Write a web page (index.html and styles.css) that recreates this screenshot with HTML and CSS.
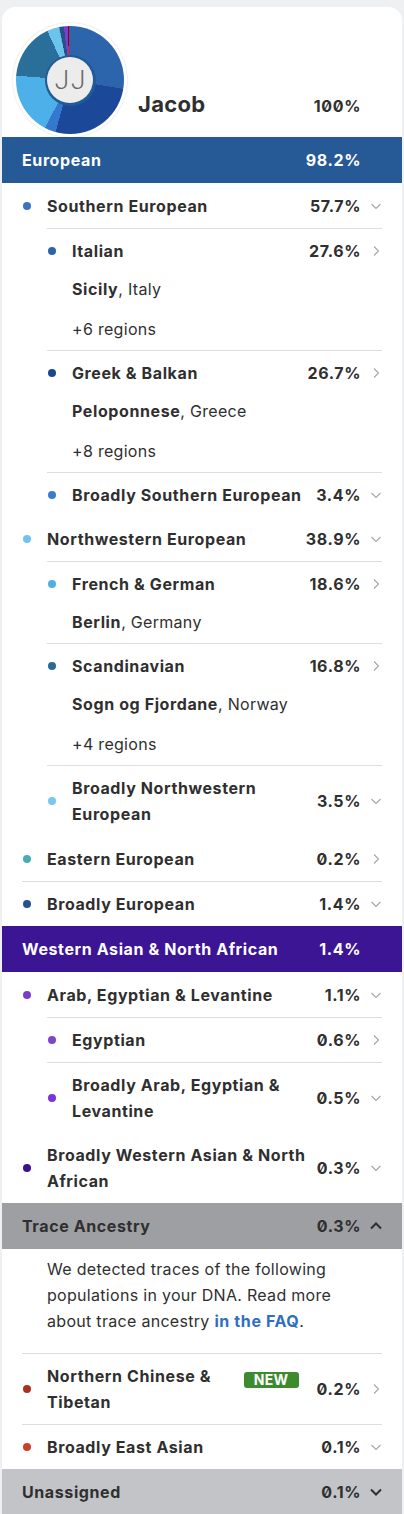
FILE: index.html
```html
<!DOCTYPE html>
<html lang="en">
<head>
<meta charset="utf-8">
<title>Ancestry Composition</title>
<link rel="stylesheet" href="styles.css">
</head>
<body>
<div class="card">
  <div class="profile">
    <div class="avatar">
      <div class="donut">
        <div class="hole-ring"><div class="hole"><span class="initials">JJ</span></div></div>
      </div>
    </div>
    <div class="profile-info">
      <span class="profile-name">Jacob</span>
      <span class="pct">100%</span>
      <span class="chev"></span>
    </div>
  </div>

  <div class="head head-eu"><span class="name">European</span><span class="pct">98.2%</span><span class="chev"></span></div>
  <div class="list">
    <div class="entry tall">
      <div class="line"><span class="dot c-south"></span><span class="name">Southern European</span><span class="pct">57.7%</span><svg class="chev" viewBox="0 0 12 12"><path class="ch-light" d="M1.5 4 L6 8.5 L10.5 4"/></svg></div>
    </div>
    <div class="sublist">
      <div class="entry bt has-loc">
        <div class="line"><span class="dot c-italian"></span><span class="name">Italian</span><span class="pct">27.6%</span><svg class="chev" viewBox="0 0 12 12"><path class="ch-light" d="M4 1.5 L8.5 6 L4 10.5"/></svg></div>
        <div class="loc"><b>Sicily</b>, Italy</div>
        <div class="loc more">+6 regions</div>
      </div>
      <div class="entry bt has-loc">
        <div class="line"><span class="dot c-greek"></span><span class="name">Greek &amp; Balkan</span><span class="pct">26.7%</span><svg class="chev" viewBox="0 0 12 12"><path class="ch-light" d="M4 1.5 L8.5 6 L4 10.5"/></svg></div>
        <div class="loc"><b>Peloponnese</b>, Greece</div>
        <div class="loc more">+8 regions</div>
      </div>
      <div class="entry bt">
        <div class="line"><span class="dot c-bsouth"></span><span class="name">Broadly Southern European</span><span class="pct">3.4%</span><svg class="chev" viewBox="0 0 12 12"><path class="ch-light" d="M1.5 4 L6 8.5 L10.5 4"/></svg></div>
      </div>
    </div>
    <div class="entry">
      <div class="line"><span class="dot c-nw"></span><span class="name">Northwestern European</span><span class="pct">38.9%</span><svg class="chev" viewBox="0 0 12 12"><path class="ch-light" d="M1.5 4 L6 8.5 L10.5 4"/></svg></div>
    </div>
    <div class="sublist">
      <div class="entry bt has-loc">
        <div class="line"><span class="dot c-french"></span><span class="name">French &amp; German</span><span class="pct">18.6%</span><svg class="chev" viewBox="0 0 12 12"><path class="ch-light" d="M4 1.5 L8.5 6 L4 10.5"/></svg></div>
        <div class="loc"><b>Berlin</b>, Germany</div>
      </div>
      <div class="entry bt has-loc">
        <div class="line"><span class="dot c-scand"></span><span class="name">Scandinavian</span><span class="pct">16.8%</span><svg class="chev" viewBox="0 0 12 12"><path class="ch-light" d="M4 1.5 L8.5 6 L4 10.5"/></svg></div>
        <div class="loc"><b>Sogn og Fjordane</b>, Norway</div>
        <div class="loc more">+4 regions</div>
      </div>
      <div class="entry bt">
        <div class="line"><span class="dot c-bnw"></span><span class="name">Broadly Northwestern European</span><span class="pct">3.5%</span><svg class="chev" viewBox="0 0 12 12"><path class="ch-light" d="M1.5 4 L6 8.5 L10.5 4"/></svg></div>
      </div>
    </div>
    <div class="entry tall">
      <div class="line"><span class="dot c-east"></span><span class="name">Eastern European</span><span class="pct">0.2%</span><svg class="chev" viewBox="0 0 12 12"><path class="ch-light" d="M4 1.5 L8.5 6 L4 10.5"/></svg></div>
    </div>
    <div class="entry bt">
      <div class="line"><span class="dot c-beu"></span><span class="name">Broadly European</span><span class="pct">1.4%</span><svg class="chev" viewBox="0 0 12 12"><path class="ch-light" d="M1.5 4 L6 8.5 L10.5 4"/></svg></div>
    </div>
  </div>

  <div class="head head-wana"><span class="name">Western Asian &amp; North African</span><span class="pct">1.4%</span><span class="chev"></span></div>
  <div class="list">
    <div class="entry tall">
      <div class="line"><span class="dot c-arab"></span><span class="name">Arab, Egyptian &amp; Levantine</span><span class="pct">1.1%</span><svg class="chev" viewBox="0 0 12 12"><path class="ch-light" d="M1.5 4 L6 8.5 L10.5 4"/></svg></div>
    </div>
    <div class="sublist">
      <div class="entry bt">
        <div class="line"><span class="dot c-egypt"></span><span class="name">Egyptian</span><span class="pct">0.6%</span><svg class="chev" viewBox="0 0 12 12"><path class="ch-light" d="M4 1.5 L8.5 6 L4 10.5"/></svg></div>
      </div>
      <div class="entry bt">
        <div class="line"><span class="dot c-barab"></span><span class="name">Broadly Arab, Egyptian &amp; Levantine</span><span class="pct">0.5%</span><svg class="chev" viewBox="0 0 12 12"><path class="ch-light" d="M1.5 4 L6 8.5 L10.5 4"/></svg></div>
      </div>
    </div>
    <div class="entry">
      <div class="line"><span class="dot c-bwana"></span><span class="name">Broadly Western Asian &amp; North African</span><span class="pct">0.3%</span><svg class="chev" viewBox="0 0 12 12"><path class="ch-light" d="M1.5 4 L6 8.5 L10.5 4"/></svg></div>
    </div>
  </div>

  <div class="head head-trace"><span class="name">Trace Ancestry</span><span class="pct">0.3%</span><svg class="chev" viewBox="0 0 12 12"><path class="ch-dark" d="M1 8.5 L6 3.5 L11 8.5"/></svg></div>
  <div class="list">
    <p class="trace-text">We detected traces of the following populations in your DNA. Read more about trace ancestry <a class="faq" href="#">in the FAQ</a>.</p>
    <div class="entry bt">
      <div class="line"><span class="dot c-nchin"></span><span class="name">Northern Chinese &amp; Tibetan</span><span class="badge">NEW</span><span class="pct">0.2%</span><svg class="chev" viewBox="0 0 12 12"><path class="ch-light" d="M4 1.5 L8.5 6 L4 10.5"/></svg></div>
    </div>
    <div class="entry bt">
      <div class="line"><span class="dot c-beast"></span><span class="name">Broadly East Asian</span><span class="pct">0.1%</span><svg class="chev" viewBox="0 0 12 12"><path class="ch-light" d="M1.5 4 L6 8.5 L10.5 4"/></svg></div>
    </div>
  </div>

  <div class="head head-unassigned"><span class="name">Unassigned</span><span class="pct">0.1%</span><svg class="chev" viewBox="0 0 12 12"><path class="ch-dark" d="M1 3.5 L6 8.5 L11 3.5"/></svg></div>
</div>
</body>
</html>
```

FILE: styles.css
```css
html, body {
  margin: 0;
  padding: 0;
}
body {
  background: #eef0f2;
  font-family: Inter, "Noto Sans", "DejaVu Sans", sans-serif;
  font-size: 16px;
  letter-spacing: 0.3px;
  color: #2f2f2f;
  height: 1514px;
  overflow: hidden;
}
.card {
  margin: 7px 2px 0;
  background: #fff;
  border-radius: 14px 14px 0 0;
  overflow: hidden;
}
.profile {
  display: flex;
  align-items: flex-end;
  height: 130px;
  padding: 16px 20px 0 11px;
  box-sizing: border-box;
}
.avatar {
  flex: none;
  width: 114px;
  height: 114px;
  border-radius: 50%;
  background: #fff;
  box-shadow: 0 0 2px rgba(0,0,0,0.18);
  display: flex;
  align-items: center;
  justify-content: center;
}
.donut {
  width: 108px;
  height: 108px;
  border-radius: 50%;
  background: conic-gradient(
    #2d65ad 0deg 99.4deg,
    #1c4899 99.4deg 195.5deg,
    #3578cf 195.5deg 207.7deg,
    #4db0e8 207.7deg 274.7deg,
    #2a6f99 274.7deg 335.2deg,
    #6cc3ec 335.2deg 347.8deg,
    #4aaeb0 347.8deg 348.5deg,
    #25528f 348.5deg 353.5deg,
    #7a3fc8 353.5deg 357.5deg,
    #3a128f 357.5deg 358.6deg,
    #b3391f 358.6deg 359.6deg,
    #c3c4c7 359.6deg 360deg
  );
  display: flex;
  align-items: center;
  justify-content: center;
}
.hole-ring {
  width: 51px;
  height: 51px;
  border-radius: 50%;
  background: #215b95;
  display: flex;
  align-items: center;
  justify-content: center;
}
.hole {
  width: 46px;
  height: 46px;
  border-radius: 50%;
  background: #ececec;
  display: flex;
  align-items: center;
  justify-content: center;
}
.initials {
  font-family: Roboto, "Liberation Sans", sans-serif;
  font-weight: 300;
  font-size: 26px;
  color: #666;
  letter-spacing: 2px;
  margin-left: 2px;
  line-height: 1;
}
.profile-info {
  flex: 1;
  display: flex;
  align-items: baseline;
  margin-left: 11px;
  margin-bottom: 20px;
}
.profile-name {
  flex: 1;
  font-weight: 700;
  font-size: 22px;
  letter-spacing: 0.3px;
  color: #2f2f2f;
}
.pct {
  font-weight: 700;
  white-space: nowrap;
  margin-left: 4px;
  letter-spacing: 0.6px;
  font-feature-settings: "zero" 1;
}
.chev {
  flex: none;
  width: 12px;
  height: 12px;
  margin-left: 9px;
}
.ch-light {
  fill: none;
  stroke: #a5a5a5;
  stroke-width: 1.1;
}
.ch-dark {
  fill: none;
  stroke: #2f2f2f;
  stroke-width: 2;
}
.head {
  display: flex;
  align-items: center;
  height: 46px;
  padding: 0 20px;
  font-weight: 700;
  letter-spacing: 0.6px;
}
.head .name {
  flex: 1;
}
.head-eu {
  background: #255a96;
  color: #fff;
}
.head-wana {
  background: #3b1594;
  color: #fff;
}
.head-trace {
  background: #9e9fa3;
  color: #2f2f2f;
}
.head-unassigned {
  background: #c3c4c7;
  color: #2f2f2f;
}
.list {
  margin: 0 20px;
}
.sublist {
  margin-left: 25px;
}
.entry {
  padding: 9px 0 9px 1px;
  line-height: 26px;
}
.entry.tall {
  padding-top: 10px;
}
.entry.has-loc {
  padding-bottom: 8px;
}
.bt {
  border-top: 1px solid #dedede;
}
.line {
  display: flex;
  align-items: center;
}
.line .name {
  flex: 1;
  font-weight: 700;
  letter-spacing: 0.6px;
}
b {
  font-weight: 700;
  letter-spacing: 0.6px;
}
.dot {
  flex: none;
  width: 8px;
  height: 8px;
  border-radius: 50%;
  margin-right: 16px;
}
.loc {
  margin-left: 24px;
  margin-top: 12px;
}
.loc.more {
  margin-top: 14px;
}
.trace-text {
  margin: 0;
  padding: 7px 25px 19px 25px;
  line-height: 26px;
}
.faq {
  color: #2f6fbf;
  font-weight: 700;
  letter-spacing: 0.6px;
  text-decoration: none;
}
.badge {
  flex: none;
  align-self: flex-start;
  margin-top: 9px;
  margin-right: 14px;
  width: 55px;
  text-align: center;
  background: #3e8a2f;
  color: #fff;
  font-size: 14px;
  font-weight: 700;
  line-height: 16px;
  border-radius: 3px;
  letter-spacing: 0.3px;
}
.c-south { background: #3a72c2; }
.c-italian { background: #2d63ad; }
.c-greek { background: #1c4592; }
.c-bsouth { background: #3b7bd0; }
.c-nw { background: #6ec4ea; }
.c-french { background: #4eafe5; }
.c-scand { background: #2a6a94; }
.c-bnw { background: #79c6ee; }
.c-east { background: #4aaeb0; }
.c-beu { background: #25528f; }
.c-arab { background: #7a3fc8; }
.c-egypt { background: #7d45c9; }
.c-barab { background: #7a35d8; }
.c-bwana { background: #3a128f; }
.c-nchin { background: #a8321f; }
.c-beast { background: #c9402c; }
```
